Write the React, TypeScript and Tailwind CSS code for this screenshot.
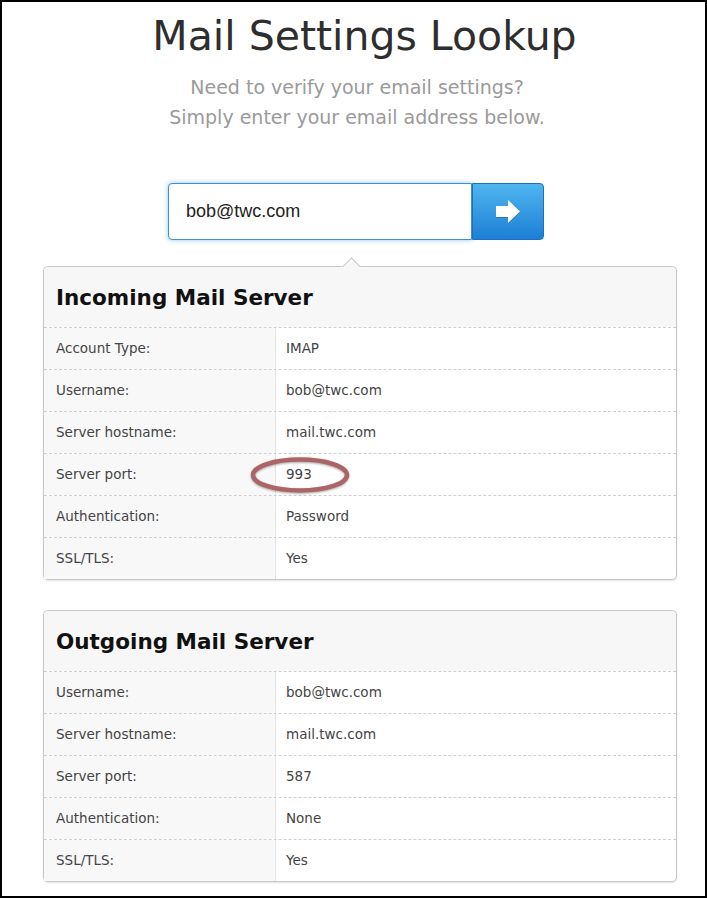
import React from "react";

type Row = { label: string; value: string; circled?: boolean };

const incoming: Row[] = [
  { label: "Account Type:", value: "IMAP" },
  { label: "Username:", value: "bob@twc.com" },
  { label: "Server hostname:", value: "mail.twc.com" },
  { label: "Server port:", value: "993", circled: true },
  { label: "Authentication:", value: "Password" },
  { label: "SSL/TLS:", value: "Yes" },
];

const outgoing: Row[] = [
  { label: "Username:", value: "bob@twc.com" },
  { label: "Server hostname:", value: "mail.twc.com" },
  { label: "Server port:", value: "587" },
  { label: "Authentication:", value: "None" },
  { label: "SSL/TLS:", value: "Yes" },
];

function ServerCard({ title, rows, caret }: { title: string; rows: Row[]; caret?: boolean }) {
  return (
    <div className="relative ml-[41px] w-[634px] rounded-[5px] border border-[#c9c9c9] bg-white shadow-[0_1px_2px_rgba(0,0,0,0.12)]">
      {caret && (
        <div className="absolute -top-[7px] left-[301px] h-[13px] w-[13px] rotate-45 border-l border-t border-[#c9c9c9] bg-[#f7f7f7]" />
      )}
      <div className="flex h-[60px] items-center rounded-t-[5px] bg-[#f7f7f7] pl-3 pt-[3px]">
        <h2 className="text-[21.5px] font-bold text-[#111]">{title}</h2>
      </div>
      {rows.map((row) => (
        <div
          key={row.label}
          className="flex h-[42px] border-t border-dashed border-[#d0d0d0] text-[13.5px] text-[#444]"
        >
          <div className="flex w-[232px] items-center border-r border-[#e4e4e4] bg-[#f8f8f8] pl-3">
            {row.label}
          </div>
          <div className="relative flex flex-1 items-center pl-[10px]">
            {row.value}
            {row.circled && (
              <svg
                className="absolute left-[-26px] top-[3px] drop-shadow-[0_1px_1px_rgba(0,0,0,0.35)]"
                width="100"
                height="36"
                viewBox="0 0 100 36"
              >
                <ellipse cx="50" cy="18" rx="47" ry="15.5" fill="none" stroke="#ad6466" strokeWidth="4.5" />
              </svg>
            )}
          </div>
        </div>
      ))}
    </div>
  );
}

export default function App() {
  return (
    <div className="h-[898px] w-[707px] border-2 border-black bg-white font-['DejaVu_Sans','Noto_Sans',sans-serif]">
      <h1 className="pl-[22px] pt-[9px] text-center text-[41px] leading-[50px] text-[#2e2e2e]">
        Mail Settings Lookup
      </h1>
      <p className="mt-[11px] pl-[7px] text-center text-[19px] leading-[30px] text-[#9a9a9a]">
        Need to verify your email settings?
        <br />
        Simply enter your email address below.
      </p>
      <div className="mt-[51px] flex pl-[166px]">
        <div className="flex h-[57px] w-[304px] items-center rounded-l-[4px] border border-[#3c8fd8] bg-white pl-[17px] font-['Liberation_Sans',Arial,sans-serif] text-[18px] text-[#222] shadow-[0_0_5px_rgba(80,160,235,0.6)]">
          bob@twc.com
        </div>
        <button className="flex h-[57px] w-[72px] items-center justify-center rounded-r-[4px] border border-[#1d6fc0] bg-gradient-to-b from-[#4fb5ee] to-[#1c7fd5]">
          <svg width="25" height="23" viewBox="0 0 25 23" className="drop-shadow-[0_1px_0_rgba(0,0,0,0.2)]">
            <polygon points="0,6 12,6 12,0 24,11.5 12,23 12,17 0,17" fill="#ffffff" />
          </svg>
        </button>
      </div>
      <div className="mt-[26px]">
        <ServerCard title="Incoming Mail Server" rows={incoming} caret />
      </div>
      <div className="mt-[30px]">
        <ServerCard title="Outgoing Mail Server" rows={outgoing} />
      </div>
    </div>
  );
}
